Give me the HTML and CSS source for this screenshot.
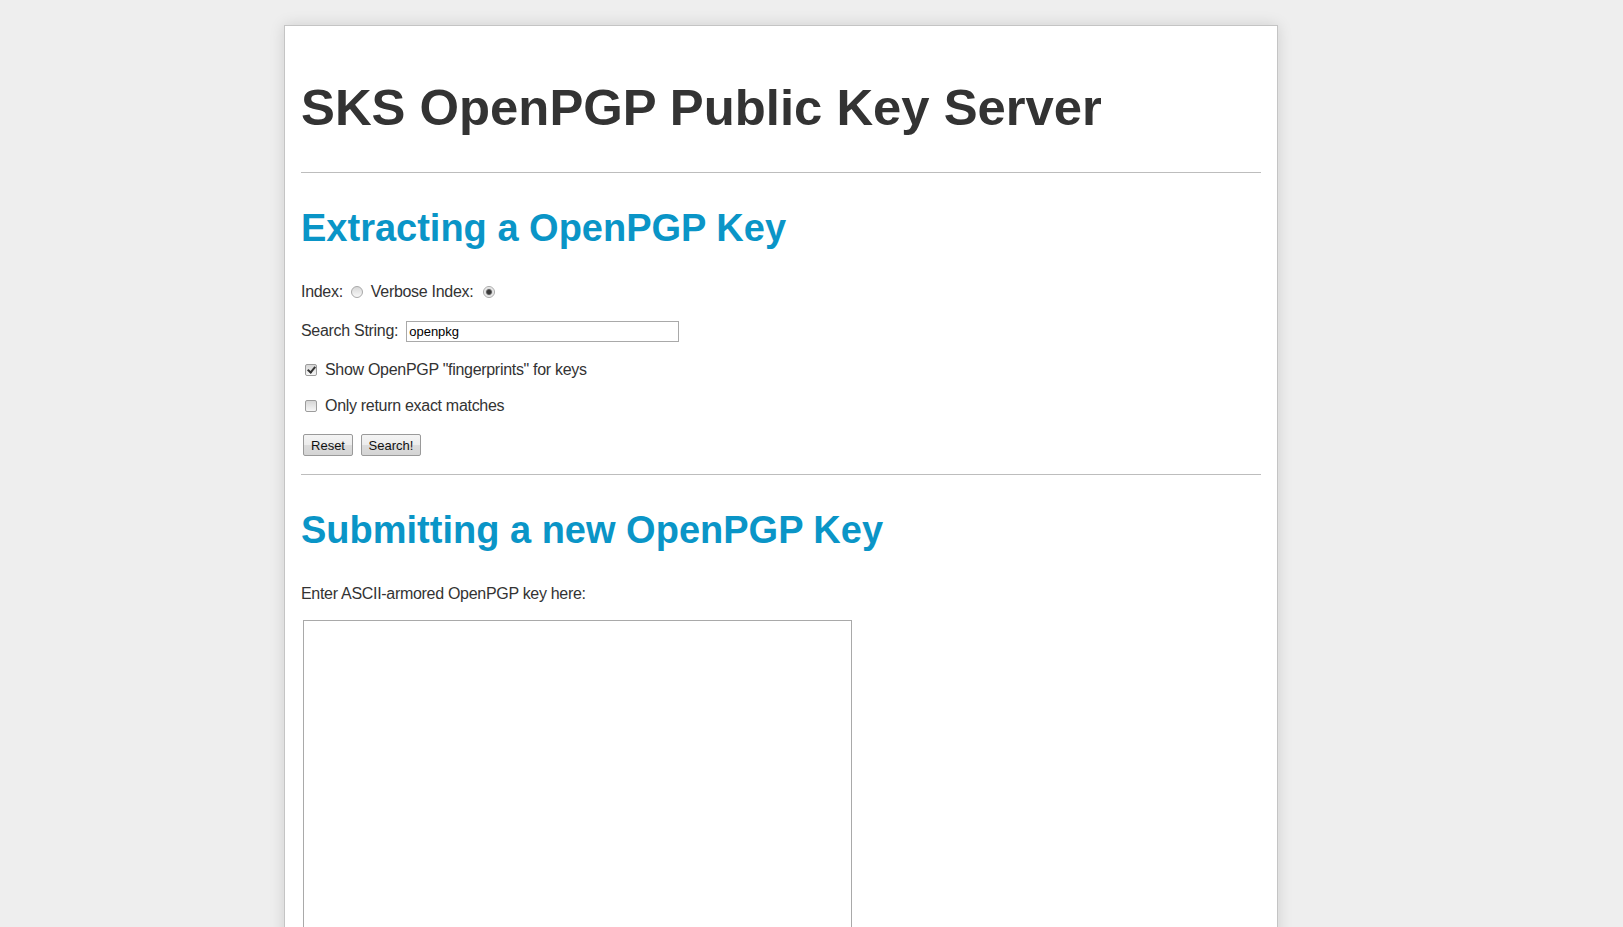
FILE: index.html
```html
<!DOCTYPE html>
<html lang="en">
<head>
<meta charset="utf-8">
<title>SKS OpenPGP Public Key Server</title>
<link rel="stylesheet" href="styles.css">
</head>
<body>
<div class="page">
  <h1 class="title">SKS OpenPGP Public Key Server</h1>
  <hr class="rule">
  <h2 class="section-title">Extracting a OpenPGP Key</h2>
  <form class="search-form">
    <div class="row">
      <span class="txt">Index:</span>
      <input type="radio" name="op" class="radio">
      <span class="txt">Verbose Index:</span>
      <input type="radio" name="op" class="radio radio-last" checked>
    </div>
    <div class="row">
      <label class="txt" for="search">Search String:</label>
      <input id="search" class="text-input" type="text" value="openpkg">
    </div>
    <div class="row">
      <input type="checkbox" class="checkbox" checked>
      <span class="txt">Show OpenPGP "fingerprints" for keys</span>
    </div>
    <div class="row row-tight">
      <input type="checkbox" class="checkbox">
      <span class="txt">Only return exact matches</span>
    </div>
    <div class="row buttons">
      <button type="reset" class="btn">Reset</button>
      <button type="button" class="btn">Search!</button>
    </div>
  </form>
  <hr class="rule rule-after-form">
  <h2 class="section-title">Submitting a new OpenPGP Key</h2>
  <form class="submit-form">
    <p class="txt label">Enter ASCII-armored OpenPGP key here:</p>
    <textarea class="keytext"></textarea>
  </form>
</div>
</body>
</html>
```
FILE: styles.css
```css
html, body {
  margin: 0;
  padding: 0;
  overflow: hidden;
}

body {
  background: #eeeeee;
  font-family: "Liberation Sans", Arial, sans-serif;
  color: #333333;
}

.page {
  width: 960px;
  min-height: 1100px;
  margin: 25px 0 0 284px;
  padding: 52px 16px 0;
  background: #ffffff;
  border: 1px solid #c4c4c4;
  box-shadow: 0 0 14px rgba(0, 0, 0, 0.13);
}

.title {
  margin: 0;
  font-size: 50.8px;
  line-height: 60px;
  font-weight: bold;
  color: #333333;
}

.rule {
  margin: 34px 0 0;
  height: 0;
  border: 0;
  border-top: 1px solid #bdbdbd;
}

.rule-after-form {
  margin-top: 18px;
}

.section-title {
  margin: 32px 0 0;
  font-size: 38px;
  line-height: 46px;
  font-weight: bold;
  color: #0a95c7;
}

.search-form {
  margin: 30px 0 0;
}

.txt {
  font-size: 16px;
  line-height: 20px;
  letter-spacing: -0.3px;
  color: #333333;
}

.row {
  display: flex;
  align-items: center;
  height: 22px;
  margin-top: 17px;
}

.row:first-child {
  margin-top: 0;
}

.row-tight {
  margin-top: 14px;
}

.radio {
  appearance: none;
  -webkit-appearance: none;
  width: 12px;
  height: 12px;
  margin: 0 8px 0 8px;
  border: 1px solid #a8a8a8;
  border-radius: 50%;
  background: linear-gradient(#d8d8d8, #f8f8f8);
  flex: none;
}

.radio-last {
  margin-left: 10px;
}

.radio:checked {
  background: radial-gradient(circle, #3a3a3a 0 1.8px, #6a6a6a 2.6px, #d9d9d9 3.4px, #f4f4f4 5px);
}

.text-input {
  box-sizing: border-box;
  width: 273px;
  height: 21px;
  margin: 0 0 0 8px;
  padding: 0 2px;
  border: 1px solid #a9a9a9;
  font-family: "Liberation Sans", Arial, sans-serif;
  font-size: 13px;
  color: #000000;
  background: #ffffff;
  outline: none;
}

.checkbox {
  appearance: none;
  -webkit-appearance: none;
  position: relative;
  width: 12px;
  height: 12px;
  margin: 0 8px 0 4px;
  border: 1px solid #9c9c9c;
  border-radius: 2px;
  background: linear-gradient(#d6d6d6, #f6f6f6);
  flex: none;
}

.checkbox:checked::after {
  content: "";
  position: absolute;
  left: 3px;
  top: 0px;
  width: 3px;
  height: 6px;
  border-right: 2px solid #333333;
  border-bottom: 2px solid #333333;
  transform: rotate(40deg);
}

.buttons {
  gap: 8px;
  padding-left: 2px;
}

.btn {
  box-sizing: border-box;
  height: 22px;
  padding: 0 6px;
  border: 1px solid #9a9a9a;
  border-radius: 2px;
  background: linear-gradient(#f4f4f4 0%, #ececec 50%, #dcdcdc 51%, #d4d4d4 100%);
  font-family: "Liberation Sans", Arial, sans-serif;
  font-size: 13px;
  color: #111111;
}

.btn:first-child {
  width: 50px;
}

.btn:last-child {
  width: 60px;
}

.submit-form {
  margin: 0;
}

.label {
  margin: 31px 0 0;
}

.keytext {
  display: block;
  box-sizing: border-box;
  width: 549px;
  height: 420px;
  margin: 16px 0 0 2px;
  border: 1px solid #a9a9a9;
  resize: none;
  background: #ffffff;
}
```
